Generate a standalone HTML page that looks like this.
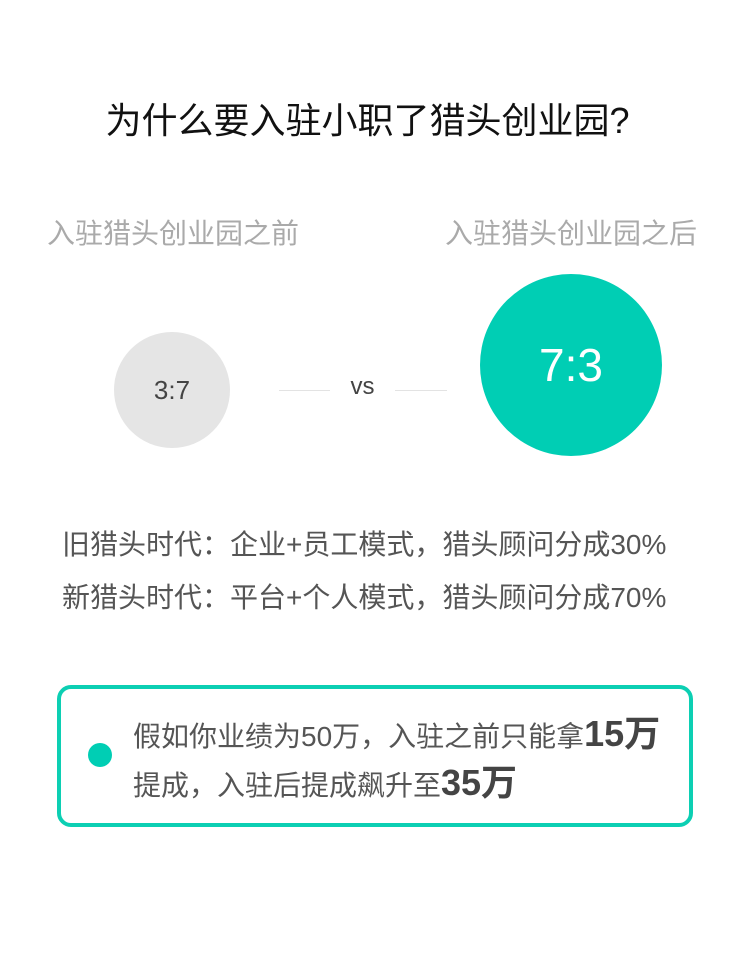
<!DOCTYPE html>
<html><head><meta charset="utf-8"><style>
body{margin:0;width:750px;height:954px;background:#fff;position:relative;font-family:"Liberation Sans","Noto Sans CJK SC",sans-serif;overflow:hidden}
.a{position:absolute;white-space:nowrap}
</style></head><body>
<div class="a" style="left:0;width:735px;top:101px;text-align:center;font-size:36px;color:#111;line-height:40px">为什么要入驻小职了猎头创业园?</div>
<div class="a" style="left:47px;top:219px;font-size:28px;color:#aaa;line-height:30px">入驻猎头创业园之前</div>
<div class="a" style="left:445px;top:219px;font-size:28px;color:#aaa;line-height:30px">入驻猎头创业园之后</div>
<div class="a" style="left:114px;top:332px;width:116px;height:116px;border-radius:50%;background:#e5e5e5;color:#444;font-size:26px;line-height:116px;text-align:center">3:7</div>
<div class="a" style="left:279px;top:390px;width:51px;height:1px;background:#e3e3e3"></div>
<div class="a" style="left:395px;top:390px;width:52px;height:1px;background:#e3e3e3"></div>
<div class="a" style="left:330px;width:65px;top:372px;text-align:center;font-size:24px;color:#444;line-height:30px">vs</div>
<div class="a" style="left:480px;top:274px;width:182px;height:182px;border-radius:50%;background:#00ceb4;color:#fff;font-size:46px;line-height:182px;text-align:center">7:3</div>
<div class="a" style="left:62px;top:529px;font-size:28px;color:#555;line-height:32px">旧猎头时代：企业+员工模式，猎头顾问分成30%</div>
<div class="a" style="left:62px;top:582px;font-size:28px;color:#555;line-height:32px">新猎头时代：平台+个人模式，猎头顾问分成70%</div>
<div class="a" style="left:57px;top:685px;width:628px;height:134px;border:4px solid #0ccfb3;border-radius:14px"></div>
<div class="a" style="left:88px;top:743px;width:24px;height:24px;border-radius:50%;background:#00ceb4"></div>
<div class="a" style="left:133px;top:711px;font-size:28px;color:#555;line-height:46px">假如你业绩为50万，入驻之前只能拿<b style="font-size:36px;color:#444">15万</b><br>提成，入驻后提成飙升至<b style="font-size:36px;color:#444">35万</b></div>
</body></html>
